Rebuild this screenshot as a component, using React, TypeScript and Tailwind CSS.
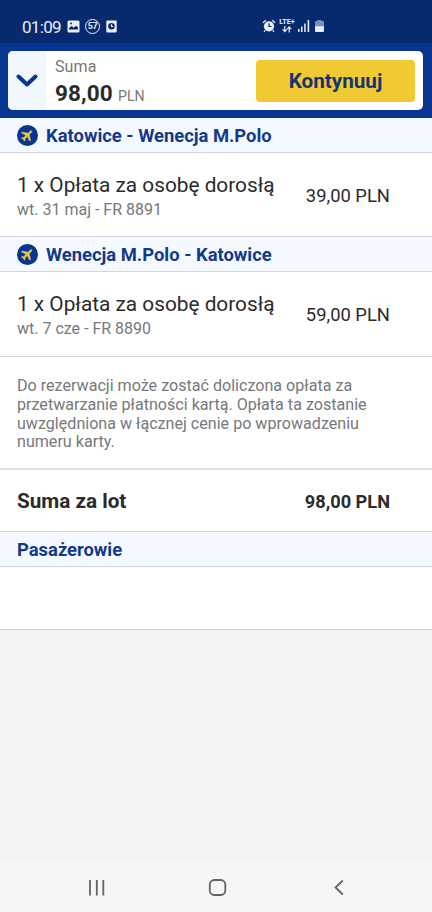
import { clsx } from 'clsx';

const flights = [
    {
        id: 1,
        route: 'Katowice - Wenecja M.Polo',
        fare: '1 x Opłata za osobę dorosłą',
        details: 'wt. 31 maj - FR 8891',
        price: '39,00 PLN'
    },
    {
        id: 2,
        route: 'Wenecja M.Polo - Katowice',
        fare: '1 x Opłata za osobę dorosłą',
        details: 'wt. 7 cze - FR 8890',
        price: '59,00 PLN'
    }
];

const StatusBar = () => (
    <div className="h-[43px] bg-[#062a6d] flex items-start pt-[17px] pl-[22px] text-[#e9eef8]">
        <span className="w-[39px] text-[17px] leading-5 tracking-[-0.7px] whitespace-nowrap">01:09</span>
        <svg className="ml-[6px] mt-[3px]" width="13" height="13" viewBox="0 0 13 13">
            <rect x="0.5" y="0.5" width="12" height="12" rx="1.5" fill="currentColor" />
            <path d="M2 9.500V8L4.700 6l2 1.800L9 5.800l2 1.800v1.900z" fill="#062a6d" />
            <circle cx="4" cy="3.5" r="1" fill="#062a6d" />
        </svg>
        <div className="ml-[5px] mt-[2px] size-[15px] rounded-full border border-current flex items-center justify-center text-[9px] leading-none font-bold tracking-[-0.5px]">
            57
        </div>
        <svg className="ml-[6px] mt-[3px]" width="11" height="13" viewBox="0 0 11 13">
            <rect x="0.3" y="0.5" width="10.4" height="12" rx="1" fill="currentColor" />
            <circle cx="5.5" cy="6.2" r="3.3" fill="#062a6d" />
            <path d="M5.5 4.2v2.3H7.3" fill="none" stroke="currentColor" strokeWidth="1.1" />
        </svg>
        <svg className="ml-[145px] mt-[2px]" width="14" height="14" viewBox="0 0 14 14">
            <path d="M1 3.8L3.8 1.3M13 3.8L10.2 1.3M3.2 11.3L2 12.8M10.8 11.3L12 12.8" stroke="currentColor" strokeWidth="1.3" />
            <circle cx="7" cy="7.3" r="5.1" fill="currentColor" />
            <path d="M7 4.2v3.3h2.5" fill="none" stroke="#062a6d" strokeWidth="1.2" />
        </svg>
        <div className="ml-[3px] mt-[1px] w-4 flex flex-col items-center">
            <span className="text-[7.2px] leading-[8px] font-bold">LTE+</span>
            <svg width="10" height="7" viewBox="0 0 10 7" fill="none" stroke="currentColor" strokeWidth="1.2">
                <path d="M2.8 0v5.3M0.8 3.4l2 2.2 2-2.2M7.2 6.5V1.2M5.2 3.1l2-2.2 2 2.2" />
            </svg>
        </div>
        <svg className="ml-[3px] mt-[2px]" width="12" height="13" viewBox="0 0 12 13" fill="currentColor">
            <path d="M0 10h1.5v3H0zM3 7.5h1.5V13H3zM6.2 4.5h1.5V13H6.2zM9.6 1h1.6v12H9.6z" />
        </svg>
        <svg className="ml-[5px] mt-[2px]" width="9" height="14" viewBox="0 0 9 14">
            <path d="M2.5 1h4v1H8q1 0 1 1v5H0V3q0-1 1-1h1.5z" fill="#7c8fbb" />
            <path d="M0 7.3h9V12q0 1-1 1H1q-1 0-1-1z" fill="currentColor" />
        </svg>
    </div>
);

const SummaryBar = () => (
    <header className="h-[75px] bg-[#073590] px-2 pt-2">
        <div className="h-[59px] mr-[1px] rounded-[5px] bg-white flex overflow-hidden">
            <div className="w-[38px] bg-[#f1f7fc] flex items-center justify-center">
                <svg width="22" height="14" viewBox="0 0 22 14" fill="none" stroke="#073590" strokeWidth="4" strokeLinecap="round" strokeLinejoin="round">
                    <path d="M2.5 2.5L11 10.5L19.5 2.5" />
                </svg>
            </div>
            <div className="flex-1 pl-[9px] pt-[6px]">
                <p className="text-[16px] leading-5 text-[#76787c] tracking-[0.1px]">Suma</p>
                <p className="mt-[4px] text-[22.5px] leading-6 font-bold text-[#2b2b2b] whitespace-nowrap tracking-[0.15px]">
                    98,00<span className="ml-[5px] text-[14.2px] font-normal tracking-normal text-[#76787c]">PLN</span>
                </p>
            </div>
            <button className="mt-[9px] mr-[8px] w-[159px] h-[42px] pt-[2px] rounded-[4px] bg-[#f1c933] text-[20.7px] font-bold text-[#15376f]">
                Kontynuuj
            </button>
        </div>
    </header>
);

const PlaneBadge = () => (
    <svg className="mr-[8px] shrink-0" width="21" height="21" viewBox="0 0 21 21">
        <circle cx="10.5" cy="10.5" r="10.5" fill="#073590" />
        <g transform="translate(10.5 10.5) rotate(45) scale(0.62) translate(-12 -12)">
            <path
                d="M21 16v-2l-8-5V3.500c0-.83-.67-1.500-1.500-1.500S10 2.670 10 3.500V9l-8 5v2l8-2.500V19l-2 1.500V22l3.500-1 3.500 1v-1.500L13 19v-5.500z"
                fill="#e9c84a"
                stroke="#e9c84a"
                strokeWidth="0.8"
            />
        </g>
    </svg>
);

const SectionTitle = ({ title, icon = false }: { title: string; icon?: boolean }) => (
    <div className="h-[35px] border-b border-[#d2d5da] bg-[#f4f8ff] flex items-center pl-[17px]">
        {icon && <PlaneBadge />}
        <h2 className="pt-[2px] text-[18.4px] font-bold text-[#133a86] whitespace-nowrap">{title}</h2>
    </div>
);

const NavigationBar = () => (
    <nav className="h-[50px] bg-[#f6f6f6]">
        <svg width="432" height="50" viewBox="0 0 432 50" fill="none" stroke="#646464" strokeWidth="1.8">
            <path d="M90 18v15.500M96.800 18v15.500M103.300 18v15.500" />
            <rect x="209.800" y="18" width="15.500" height="15" rx="4.500" />
            <path d="M342.800 18.500L335.500 25.500L342.800 32.500" />
        </svg>
    </nav>
);

const App = () => {
    return (
        <div className="w-[432px] h-[912px] flex flex-col overflow-hidden bg-[#f3f3f3] font-[Roboto,sans-serif]">
            <StatusBar />
            <SummaryBar />

            <main className="flex-1">
                {flights.map((flight, index) => (
                    <section key={flight.id}>
                        <SectionTitle title={flight.route} icon />
                        <div
                            className={clsx(
                                'bg-white border-b border-[#d2d5da] flex justify-between pl-[17px] pr-[42px]',
                                index === 0 ? 'h-[84px]' : 'h-[85px]'
                            )}
                        >
                            <div className="pt-[20px]">
                                <p className="text-[20.8px] leading-6 text-[#2b2b2b] whitespace-nowrap">{flight.fare}</p>
                                <p className="mt-[3px] text-[16px] leading-5 text-[#76787c] whitespace-nowrap">{flight.details}</p>
                            </div>
                            <p className="pt-[31px] text-[18.4px] leading-6 text-[#2b2b2b] whitespace-nowrap">{flight.price}</p>
                        </div>
                    </section>
                ))}

                <div className="h-[113px] bg-white border-b-2 border-[#e0e0e0] pl-[17px] pt-[20px]">
                    <p className="text-[16.1px] leading-[18.8px] text-[#76787c] whitespace-nowrap">
                        Do rezerwacji może zostać doliczona opłata za
                        <br />
                        przetwarzanie płatności kartą. Opłata ta zostanie
                        <br />
                        uwzględniona w łącznej cenie po wprowadzeniu
                        <br />
                        numeru karty.
                    </p>
                </div>

                <div className="h-[62px] pt-[2px] bg-white border-b border-[#d2d5da] flex items-center justify-between pl-[17px] pr-[42px] font-bold text-[#2b2b2b]">
                    <p className="text-[20.7px]">Suma za lot</p>
                    <p className="text-[18.2px]">98,00 PLN</p>
                </div>

                <SectionTitle title="Pasażerowie" />
                <div className="h-[63px] bg-white border-b border-[#d2d2d2]" />
            </main>

            <NavigationBar />
        </div>
    );
};

export default App;
